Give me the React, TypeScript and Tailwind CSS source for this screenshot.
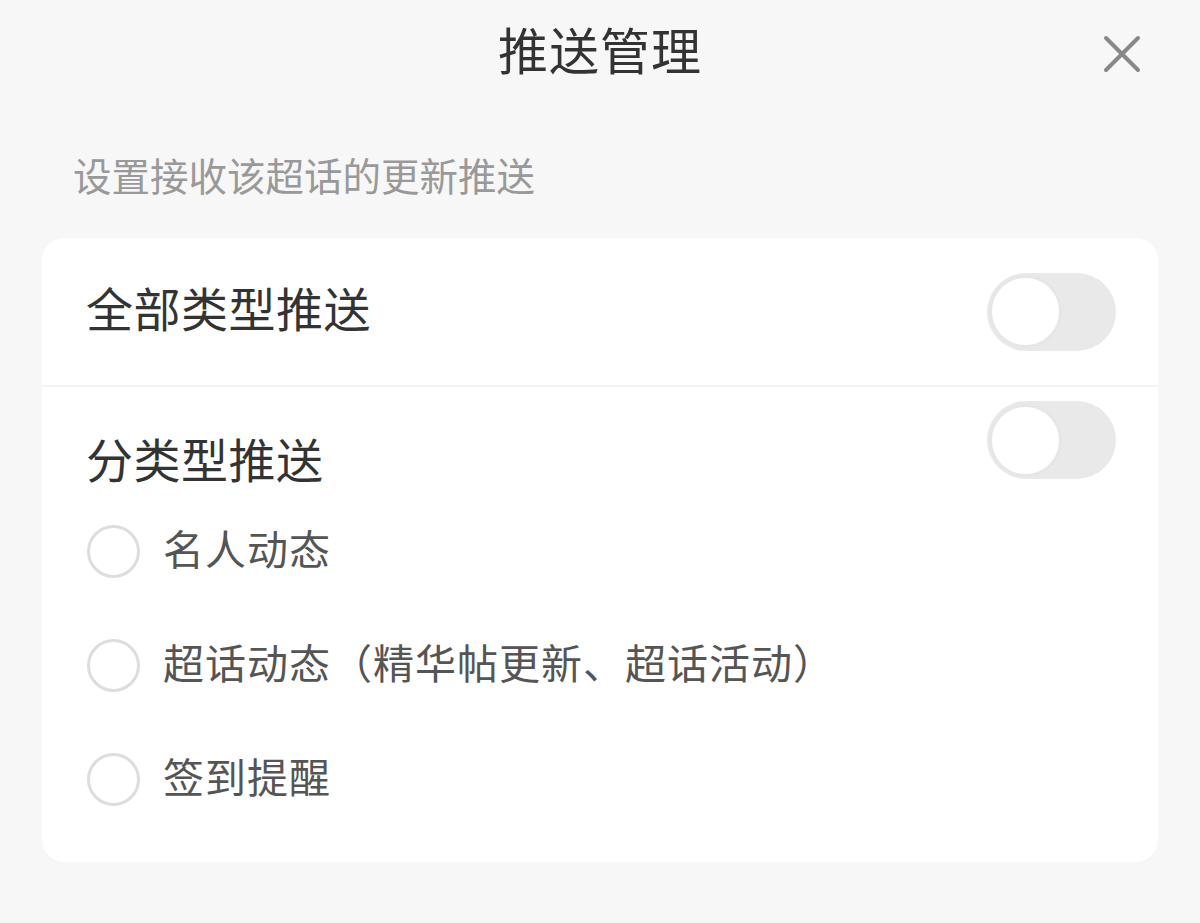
import { useState } from 'react';

const font = { fontFamily: '"Noto Sans CJK SC", "Noto Sans", sans-serif' };

const Toggle = ({ on, onChange }: { on: boolean; onChange: () => void }) => (
  <button
    onClick={onChange}
    className={`flex items-center w-[129px] h-[78px] rounded-full p-[2px] shrink-0 ${on ? 'bg-[#ff8200] justify-end' : 'bg-[#e9e9e9] justify-start'}`}
  >
    <span className="block w-[73px] h-[73px] rounded-full bg-white border-[3px] border-[#e6e6e6]" />
  </button>
);

const Radio = ({ checked }: { checked: boolean }) => (
  <span className={`block w-[53px] h-[53px] rounded-full border-[3px] shrink-0 ${checked ? 'border-[#ff8200] bg-[#ff8200]' : 'border-[#dddddd] bg-white'}`} />
);

const options = ['名人动态', '超话动态（精华帖更新、超话活动）', '签到提醒'];

export default function App() {
  const [all, setAll] = useState(false);
  const [byType, setByType] = useState(false);
  const [picked, setPicked] = useState<number[]>([]);

  const toggle = (i: number) =>
    setPicked(p => (p.includes(i) ? p.filter(x => x !== i) : [...p, i]));

  return (
    <div className="w-full min-h-[923px] bg-[#f7f7f7]" style={font}>
      <div className="relative h-[104px] flex items-center justify-center">
        <h1 className="pb-[9px] text-[50px] leading-none text-[#333333] tracking-[1px]">推送管理</h1>
        <button className="absolute right-[58px] top-[34px] w-[40px] h-[40px] flex items-center justify-center">
          <svg width="38" height="38" viewBox="0 0 38 38" fill="none" stroke="#888888" strokeWidth="4" strokeLinecap="round">
            <path d="M3 3 L35 35 M35 3 L3 35" />
          </svg>
        </button>
      </div>

      <p className="mt-[42px] pl-[73px] text-[38.5px] leading-[56px] text-[#999999]">设置接收该超话的更新推送</p>

      <div className="mx-[42px] mt-[36px] rounded-[22px] bg-white">
        <div className="h-[147px] flex items-center justify-between pl-[44px] pr-[42px]">
          <span className="pb-[10px] text-[47px] leading-none text-[#333333] tracking-[0.5px]">全部类型推送</span>
          <Toggle on={all} onChange={() => setAll(v => !v)} />
        </div>
        <div className="h-[2px] bg-[#f3f3f3]" />
        <div className="flex items-start justify-between pl-[44px] pr-[42px] pt-[14px]">
          <span className="mt-[27px] pb-[4px] text-[47px] leading-[60px] text-[#333333] tracking-[0.5px]">分类型推送</span>
          <Toggle on={byType} onChange={() => setByType(v => !v)} />
        </div>
        <div className="pl-[45px] pb-[26px] mt-[2px]">
          {options.map((o, i) => (
            <div key={o} className="h-[114px] flex items-center gap-[23px] cursor-pointer" onClick={() => toggle(i)}>
              <Radio checked={picked.includes(i)} />
              <span className="pb-[8px] text-[41px] leading-none text-[#555555] tracking-[1px]">{o}</span>
            </div>
          ))}
        </div>
      </div>
    </div>
  );
}
